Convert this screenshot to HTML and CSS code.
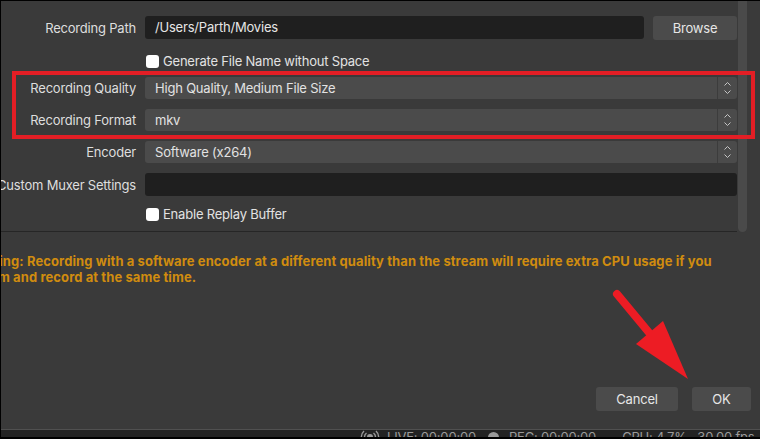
FILE: index.html
```html
<!DOCTYPE html>
<html>
<head>
<meta charset="utf-8">
<link rel="stylesheet" href="styles.css">
</head>
<body>
<div class="top">
  <div class="form">
    <div class="row row-path">
      <div class="label"><span>Recording Path</span></div>
      <div class="field-group">
        <div class="input">/Users/Parth/Movies</div>
        <div class="btn browse">Browse</div>
      </div>
    </div>
    <div class="row row-check1">
      <div class="label"></div>
      <label class="check"><span class="box"></span><span>Generate File Name without Space</span></label>
    </div>
    <div class="row row-sel first-sel">
      <div class="label"><span>Recording Quality</span></div>
      <div class="select"><span class="val">High Quality, Medium File Size</span><span class="spin"><svg width="7" height="12" viewBox="0 0 7 12"><path d="M0.5 3.5 L3.5 0.5 L6.5 3.5 M0.5 8.5 L3.5 11.5 L6.5 8.5" fill="none" stroke="#c4c4c4" stroke-width="1"/></svg></span></div>
    </div>
    <div class="row row-sel">
      <div class="label"><span>Recording Format</span></div>
      <div class="select"><span class="val">mkv</span><span class="spin"><svg width="7" height="12" viewBox="0 0 7 12"><path d="M0.5 3.5 L3.5 0.5 L6.5 3.5 M0.5 8.5 L3.5 11.5 L6.5 8.5" fill="none" stroke="#c4c4c4" stroke-width="1"/></svg></span></div>
    </div>
    <div class="row row-sel">
      <div class="label"><span>Encoder</span></div>
      <div class="select"><span class="val">Software (x264)</span><span class="spin"><svg width="7" height="12" viewBox="0 0 7 12"><path d="M0.5 3.5 L3.5 0.5 L6.5 3.5 M0.5 8.5 L3.5 11.5 L6.5 8.5" fill="none" stroke="#c4c4c4" stroke-width="1"/></svg></span></div>
    </div>
    <div class="row row-mux">
      <div class="label"><span>Custom Muxer Settings</span></div>
      <div class="input"></div>
    </div>
    <div class="row row-check2">
      <div class="label"></div>
      <label class="check"><span class="box"></span><span>Enable Replay Buffer</span></label>
    </div>
    <div class="sep"></div>
  </div>
  <div class="scrollbar"></div>
</div>
<div class="warning">Warning: Recording with a software encoder at a different quality than the stream will require extra CPU usage if you<br>stream and record at the same time.</div>
<div class="spacer"></div>
<div class="buttons">
  <div class="btn cancel">Cancel</div>
  <div class="btn ok">OK</div>
</div>
<div class="status">
  <div class="status-inner">
    <svg class="live-icon" width="20" height="14" viewBox="0 0 20 14"><path d="M4 1 A8 8 0 0 0 4 13 M6.5 3 A5 5 0 0 0 6.5 11 M16 1 A8 8 0 0 1 16 13 M13.5 3 A5 5 0 0 1 13.5 11" fill="none" stroke="#9a9a9a" stroke-width="1.4"/><circle cx="10" cy="7" r="3" fill="#9a9a9a"/></svg>
    <span class="st live">LIVE: 00:00:00</span>
    <span class="rec-dot"></span>
    <span class="st rec">REC: 00:00:00</span>
    <span class="st cpu">CPU: 4.7%,&nbsp; 30.00 fps</span>
  </div>
</div>
<div class="redbox"></div>
<svg class="arrow" width="760" height="439" viewBox="0 0 760 439"><line x1="617" y1="294" x2="651" y2="335" stroke="#ed1c24" stroke-width="8" stroke-linecap="round"/><polygon points="688,379 636,344 663,321" fill="#ed1c24"/></svg>
</body>
</html>
```
FILE: styles.css
```css
* { box-sizing: border-box; }
html, body { margin: 0; padding: 0; }
body {
  width: 760px;
  height: 439px;
  overflow: hidden;
  background: #3a3a3a;
  border-left: 1px solid #000;
  border-top: 1px solid #000;
  display: flex;
  flex-direction: column;
  font-family: Inter, "Open Sans", sans-serif;
  font-size: 13px;
  letter-spacing: -0.2px;
  color: #e2e2e2;
  position: relative;
}
.top {
  display: flex;
  height: 231px;
  flex: none;
}
.form {
  width: 736px;
  display: flex;
  flex-direction: column;
  padding-top: 15px;
}
.row {
  display: grid;
  grid-template-columns: 135px 1fr;
  column-gap: 9px;
  align-items: center;
}
.label {
  display: flex;
  justify-content: flex-end;
  white-space: nowrap;
  color: #dedede;
  min-width: 0;
}
.row-path { height: 24px; }
.field-group { display: flex; align-items: flex-start; height: 24px; }
.input {
  height: 23px;
  background: #1f1f1f;
  border-radius: 3px;
  padding-left: 10px;
  line-height: 23px;
  color: #e6e6e6;
  flex: 1;
}
.btn {
  height: 24px;
  background: #4b4b4b;
  border-radius: 3px;
  color: #e6e6e6;
  display: flex;
  align-items: center;
  justify-content: center;
}
.browse { width: 84px; margin-left: 9px; }
.row-check1 { height: 14px; margin-top: 13px; }
.row-check2 { height: 14px; margin-top: 10px; }
.check { display: flex; align-items: center; gap: 4px; margin-left: 1px; white-space: nowrap; }
.box {
  width: 13px; height: 13px; background: #fff; border-radius: 3px; display: inline-block;
}
.row-sel { height: 22px; margin-top: 10px; }
.first-sel { margin-top: 10px; }
.select {
  height: 22px;
  background: #4b4b4b;
  border-radius: 3px;
  display: flex;
  align-items: stretch;
}
.select .val { flex: 1; padding-left: 10px; line-height: 22px; }
.spin {
  width: 20px;
  border-left: 1px solid #3c3c3c;
  display: flex;
  align-items: center;
  justify-content: center;
}
.row-mux { height: 23px; margin-top: 10px; }
.sep { height: 1px; background: #262626; margin-top: 11px; }
.scrollbar {
  width: 9px;
  margin-left: 1px;
  height: 231px;
  background: #4a4a4a;
  border-radius: 0 0 5px 5px;
}
.warning {
  margin-top: 21px;
  margin-left: -36px;
  white-space: nowrap;
  color: #d08c0f;
  font-weight: 700;
  letter-spacing: 0.1px;
  line-height: 16px;
}
.spacer { flex: 1; }
.buttons {
  display: flex;
  justify-content: flex-end;
  gap: 14px;
  padding-right: 9px;
  margin-bottom: 18px;
}
.cancel { width: 82px; }
.ok { width: 59px; }
.status {
  height: 10px;
  border-top: 1px solid #505050;
  background: #232323;
  border-bottom: 2px solid #000;
  overflow: hidden;
  flex: none;
}
.status-inner {
  display: flex;
  align-items: center;
  padding-left: 359px;
  color: #9a9a9a;
  white-space: nowrap;
  line-height: 14px;
  height: 14px;
}
.live-icon { margin-right: 7px; }
.rec-dot { width: 11px; height: 11px; border-radius: 50%; background: #9a9a9a; margin-left: 12px; margin-right: 10px; }
.cpu { margin-left: 26px; }
.redbox {
  position: absolute;
  left: 11px;
  top: 70px;
  width: 743px;
  height: 68px;
  border: 4px solid #e31e25;
}
.arrow { position: absolute; left: -1px; top: -1px; }
```
